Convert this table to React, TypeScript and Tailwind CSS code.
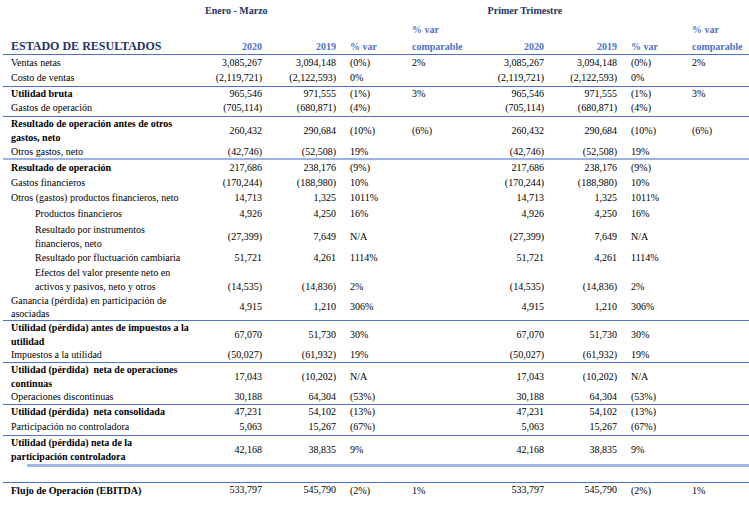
type Row = {
  label: string[];
  v: string[];
  h: number;
  bold?: boolean;
  indent?: boolean;
  bottom?: boolean;
  lh?: number;
  top?: "line" | "light";
};

const rows: Row[] = [
  { label: ["Ventas netas"], v: ["3,085,267", "3,094,148", "(0%)", "2%", "3,085,267", "3,094,148", "(0%)", "2%"], h: 15 },
  { label: ["Costo de ventas"], v: ["(2,119,721)", "(2,122,593)", "0%", "", "(2,119,721)", "(2,122,593)", "0%", ""], h: 16 },
  { label: ["Utilidad bruta"], bold: true, top: "line", v: ["965,546", "971,555", "(1%)", "3%", "965,546", "971,555", "(1%)", "3%"], h: 13 },
  { label: ["Gastos de operación"], v: ["(705,114)", "(680,871)", "(4%)", "", "(705,114)", "(680,871)", "(4%)", ""], h: 16 },
  { label: ["Resultado de operación antes de otros", "gastos, neto"], bold: true, top: "line", v: ["260,432", "290,684", "(10%)", "(6%)", "260,432", "290,684", "(10%)", "(6%)"], h: 28 },
  { label: ["Otros gastos, neto"], v: ["(42,746)", "(52,508)", "19%", "", "(42,746)", "(52,508)", "19%", ""], h: 13 },
  { label: ["Resultado de operación"], bold: true, top: "light", v: ["217,686", "238,176", "(9%)", "", "217,686", "238,176", "(9%)", ""], h: 16 },
  { label: ["Gastos financieros"], v: ["(170,244)", "(188,980)", "10%", "", "(170,244)", "(188,980)", "10%", ""], h: 14 },
  { label: ["Otros (gastos) productos financieros, neto"], v: ["14,713", "1,325", "1011%", "", "14,713", "1,325", "1011%", ""], h: 16 },
  { label: ["Productos financieros"], indent: true, v: ["4,926", "4,250", "16%", "", "4,926", "4,250", "16%", ""], h: 16 },
  { label: ["Resultado por instrumentos", "financieros, neto"], indent: true, v: ["(27,399)", "7,649", "N/A", "", "(27,399)", "7,649", "N/A", ""], h: 29 },
  { label: ["Resultado por fluctuación cambiaria"], indent: true, v: ["51,721", "4,261", "1114%", "", "51,721", "4,261", "1114%", ""], h: 13 },
  { label: ["Efectos del valor presente neto en", "activos y pasivos, neto y otros"], indent: true, bottom: true, v: ["(14,535)", "(14,836)", "2%", "", "(14,535)", "(14,836)", "2%", ""], h: 30 },
  { label: ["Ganancia (pérdida) en participación de", "asociadas"], lh: 13, v: ["4,915", "1,210", "306%", "", "4,915", "1,210", "306%", ""], h: 26 },
  { label: ["Utilidad (pérdida) antes de impuestos a la", "utilidad"], bold: true, top: "line", v: ["67,070", "51,730", "30%", "", "67,070", "51,730", "30%", ""], h: 27 },
  { label: ["Impuestos a la utilidad"], v: ["(50,027)", "(61,932)", "19%", "", "(50,027)", "(61,932)", "19%", ""], h: 14 },
  { label: ["Utilidad (pérdida)  neta de operaciones", "continuas"], bold: true, top: "line", v: ["17,043", "(10,202)", "N/A", "", "17,043", "(10,202)", "N/A", ""], h: 27 },
  { label: ["Operaciones discontinuas"], v: ["30,188", "64,304", "(53%)", "", "30,188", "64,304", "(53%)", ""], h: 14 },
  { label: ["Utilidad (pérdida)  neta consolidada"], bold: true, top: "line", v: ["47,231", "54,102", "(13%)", "", "47,231", "54,102", "(13%)", ""], h: 14 },
  { label: ["Participación no controladora"], v: ["5,063", "15,267", "(67%)", "", "5,063", "15,267", "(67%)", ""], h: 16 },
  { label: ["Utilidad (pérdida) neta de la", "participación controladora"], bold: true, top: "line", v: ["42,168", "38,835", "9%", "", "42,168", "38,835", "9%", ""], h: 28 },
];

const cols = "grid grid-cols-[187px_72px_74px_76px_68px_64px_73px_75px_54px]";
const align = ["text-right", "text-right", "pl-[14px]", "", "text-right", "text-right", "pl-[14px]", ""];

function DataRow({ r }: { r: Row }) {
  const border =
    r.top === "line"
      ? "border-t border-[#4a74c6]"
      : r.top === "light"
      ? "border-t-2 border-[#9cb2e2]"
      : "";
  const lh = r.lh ? "leading-[13px]" : "leading-[14px]";
  return (
    <div className={`${cols} ${border} ${r.bottom ? "items-end" : "items-center"}`} style={{ height: r.h + (r.top === "line" ? 1 : r.top === "light" ? 2 : 0) }}>
      <div className={`${r.indent ? "pl-[32px]" : "pl-[8px]"} ${r.bold ? "font-bold" : ""} ${lh} whitespace-pre`}>
        {r.label.map((l, i) => (
          <div key={i}>{l}</div>
        ))}
      </div>
      {r.v.map((v, i) => (
        <div key={i} className={`${align[i]} leading-[14px] whitespace-nowrap`}>
          {v}
        </div>
      ))}
    </div>
  );
}

export default function App() {
  const head = "text-[#4a72c4] font-bold";
  return (
    <div className="w-[749px] h-[506px] bg-white overflow-hidden text-[10px] text-black font-['Liberation_Serif',serif]">
      <div className="ml-[3px]">
        <div className="flex h-[20px] items-center text-[#1f3464] font-bold">
          <div className="ml-[202px]">Enero - Marzo</div>
          <div className="ml-[220px]">Primer Trimestre</div>
        </div>
        <div className={`${cols} h-[19px] items-center`}>
          <div className="col-start-5 ${head}">
            <span className={head}>% var</span>
          </div>
          <div className="col-start-9">
            <span className={head}>% var</span>
          </div>
        </div>
        <div className={`${cols} h-[15px] items-end leading-[14px]`}>
          <div className="pl-[8px] text-[12px] font-bold text-[#1f3464] leading-[15px]">ESTADO DE RESULTADOS</div>
          <div className={`text-right ${head}`}>2020</div>
          <div className={`text-right ${head}`}>2019</div>
          <div className={`pl-[14px] ${head}`}>% var</div>
          <div className={head}>comparable</div>
          <div className={`text-right ${head}`}>2020</div>
          <div className={`text-right ${head}`}>2019</div>
          <div className={`pl-[14px] ${head}`}>% var</div>
          <div className={head}>comparable</div>
        </div>
        <div className="border-t border-[#4a74c6]">
          {rows.map((r, i) => (
            <DataRow key={i} r={r} />
          ))}
        </div>
        <div className="ml-[24px] h-[3px] bg-[#a2b6e4]" />
        <div className="h-[15px]" />
        <div className={`${cols} h-[16px] items-center border-t border-[#4a74c6]`}>
          <div className="pl-[8px] font-bold leading-[14px]">Flujo de Operación (EBITDA)</div>
          <div className="text-right leading-[14px] -mt-[1px]">533,797</div>
          <div className="text-right leading-[14px] -mt-[1px]">545,790</div>
          <div className="pl-[14px] leading-[14px]">(2%)</div>
          <div className="leading-[14px]">1%</div>
          <div className="text-right leading-[14px] -mt-[1px]">533,797</div>
          <div className="text-right leading-[14px] -mt-[1px]">545,790</div>
          <div className="pl-[14px] leading-[14px]">(2%)</div>
          <div className="leading-[14px]">1%</div>
        </div>
      </div>
    </div>
  );
}
